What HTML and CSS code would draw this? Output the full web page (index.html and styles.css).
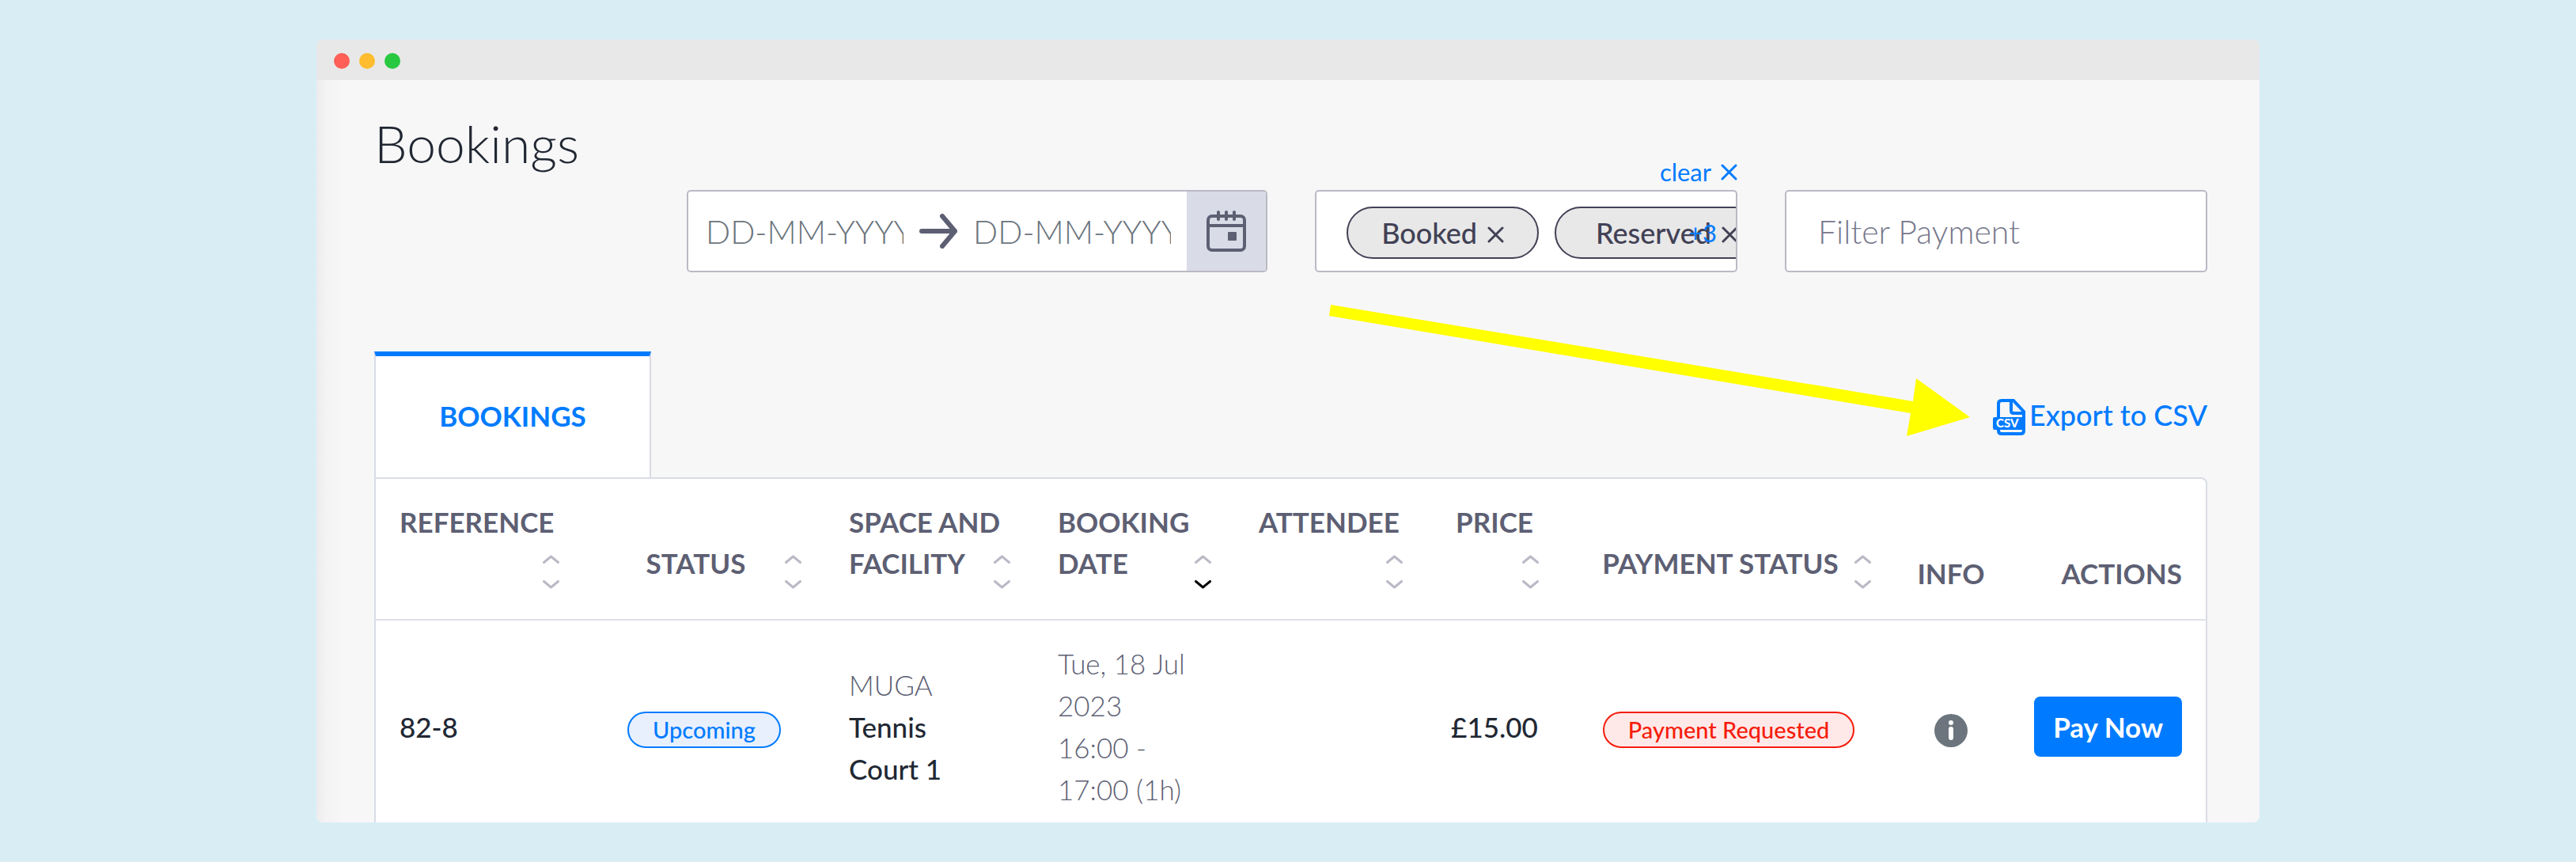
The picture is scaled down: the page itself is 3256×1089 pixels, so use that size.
FILE: index.html
```html
<!DOCTYPE html>
<html lang="en">
  <head>
    <meta charset="utf-8" />
    <title>Bookings</title>
    <meta name="viewport" content="width=device-width, initial-scale=1" />
    <link rel="stylesheet" href="styles.css">
  </head>
  <body>
    <svg class="sprite" aria-hidden="true">
      <symbol id="icon-sort-up" viewBox="0 0 21 11">
        <path d="M1.5 9.5 10.5 2 19.5 9.5" fill="none" stroke="currentColor" stroke-width="3" stroke-linecap="round" stroke-linejoin="round" />
      </symbol>
      <symbol id="icon-sort-down" viewBox="0 0 21 11">
        <path d="M1.5 1.5 10.5 9 19.5 1.5" fill="none" stroke="currentColor" stroke-width="3" stroke-linecap="round" stroke-linejoin="round" />
      </symbol>
      <symbol id="icon-close" viewBox="0 0 21 21">
        <path d="M2 2 19 19M19 2 2 19" fill="none" stroke="currentColor" stroke-width="3" stroke-linecap="round" />
      </symbol>
    </svg>

    <div class="window">
      <div class="title-bar">
        <span class="dot red"></span>
        <span class="dot yellow"></span>
        <span class="dot green"></span>
      </div>

      <main class="content">
        <header class="page-header">
          <h1>Bookings</h1>

          <form class="filters">
            <div class="field date-range">
              <input type="text" name="from" placeholder="DD-MM-YYYY" aria-label="From date" />
              <svg class="arrow-icon" viewBox="0 0 48 44" aria-hidden="true">
                <path d="M3 22H45M29 3 45 22 29 41" fill="none" stroke="currentColor" stroke-width="6" stroke-linecap="round" stroke-linejoin="round" />
              </svg>
              <input type="text" name="to" placeholder="DD-MM-YYYY" aria-label="To date" />
              <button type="button" class="calendar" aria-label="Open calendar">
                <svg viewBox="0 0 50 52" aria-hidden="true">
                  <rect x="2" y="7" width="46" height="43" rx="5" fill="none" stroke="currentColor" stroke-width="4" />
                  <path d="M2 19H48" stroke="currentColor" stroke-width="4" />
                  <path d="M15 2V11M25 2V11M35 2V11" stroke="currentColor" stroke-width="4" stroke-linecap="round" />
                  <rect x="27" y="27" width="11" height="11" rx="1" fill="currentColor" />
                </svg>
              </button>
            </div>

            <div class="status-filter">
              <button type="button" class="clear">clear <svg class="close-icon" aria-hidden="true"><use href="#icon-close" /></svg></button>
              <div class="field chips">
                <span class="chip">Booked <button type="button" aria-label="Remove Booked"><svg class="close-icon" aria-hidden="true"><use href="#icon-close" /></svg></button></span>
                <span class="chip">Reserved <button type="button" aria-label="Remove Reserved"><svg class="close-icon" aria-hidden="true"><use href="#icon-close" /></svg></button></span>
                <span class="more">+3</span>
              </div>
            </div>

            <input class="field payment" type="text" name="payment" placeholder="Filter Payment" aria-label="Filter Payment" />
          </form>
        </header>

        <div class="toolbar">
          <a class="tab" href="#bookings">BOOKINGS</a>
          <a class="export" href="#export">
            <svg class="csv-icon" viewBox="0 0 41 46" aria-hidden="true">
              <path d="M7 24V6Q7 2 11 2H26L39 16V40Q39 44 35 44H11Q7 44 7 40V36" fill="none" stroke="currentColor" stroke-width="4" />
              <path d="M23 3V15Q23 18 26 18H39" fill="none" stroke="currentColor" stroke-width="4" />
              <path d="M2 23H39V39H2Q0 39 0 36V26Q0 23 2 23Z" fill="currentColor" />
              <text x="4" y="36" class="csv-text">CSV</text>
            </svg>
            Export to CSV
          </a>
        </div>

        <div class="panel" id="bookings">
          <table>
            <colgroup>
              <col class="col-reference" />
              <col class="col-status" />
              <col class="col-space" />
              <col class="col-date" />
              <col class="col-attendee" />
              <col class="col-price" />
              <col class="col-payment" />
              <col class="col-info" />
              <col class="col-actions" />
            </colgroup>
            <thead>
              <tr>
                <th>
                  <button type="button" class="sort tall">
                    <span class="label">REFERENCE</span>
                    <span class="carets"><svg><use href="#icon-sort-up" /></svg><svg><use href="#icon-sort-down" /></svg></span>
                  </button>
                </th>
                <th>
                  <button type="button" class="sort center">
                    <span class="label">STATUS</span>
                    <span class="carets"><svg><use href="#icon-sort-up" /></svg><svg><use href="#icon-sort-down" /></svg></span>
                  </button>
                </th>
                <th>
                  <button type="button" class="sort tall">
                    <span class="label">SPACE AND FACILITY</span>
                    <span class="carets"><svg><use href="#icon-sort-up" /></svg><svg><use href="#icon-sort-down" /></svg></span>
                  </button>
                </th>
                <th aria-sort="descending">
                  <button type="button" class="sort tall">
                    <span class="label">BOOKING DATE</span>
                    <span class="carets"><svg><use href="#icon-sort-up" /></svg><svg class="active"><use href="#icon-sort-down" /></svg></span>
                  </button>
                </th>
                <th>
                  <button type="button" class="sort tall">
                    <span class="label">ATTENDEE</span>
                    <span class="carets"><svg><use href="#icon-sort-up" /></svg><svg><use href="#icon-sort-down" /></svg></span>
                  </button>
                </th>
                <th>
                  <button type="button" class="sort tall price">
                    <span class="label">PRICE</span>
                    <span class="carets"><svg><use href="#icon-sort-up" /></svg><svg><use href="#icon-sort-down" /></svg></span>
                  </button>
                </th>
                <th>
                  <button type="button" class="sort center">
                    <span class="label">PAYMENT STATUS</span>
                    <span class="carets"><svg><use href="#icon-sort-up" /></svg><svg><use href="#icon-sort-down" /></svg></span>
                  </button>
                </th>
                <th class="center">INFO</th>
                <th class="right">ACTIONS</th>
              </tr>
            </thead>
            <tbody>
              <tr>
                <td class="strong">82-8</td>
                <td class="center"><span class="badge blue">Upcoming</span></td>
                <td>MUGA <div class="strong">Tennis<br />Court 1</div></td>
                <td>Tue, 18 Jul 2023<br />16:00 -<br />17:00 (1h)</td>
                <td></td>
                <td class="center strong">£15.00</td>
                <td class="center"><span class="badge red">Payment Requested</span></td>
                <td class="center">
                  <button type="button" class="info" aria-label="Booking info">
                    <svg viewBox="0 0 42 42" aria-hidden="true">
                      <circle cx="21" cy="21" r="21" fill="currentColor" />
                      <circle cx="21" cy="11" r="3" fill="#fff" />
                      <path d="M21 19V30" stroke="#fff" stroke-width="6" stroke-linecap="round" />
                    </svg>
                  </button>
                </td>
                <td class="right"><button type="button" class="pay">Pay Now</button></td>
              </tr>
            </tbody>
          </table>
        </div>
      </main>

      <svg class="pointer" viewBox="0 0 810 174" aria-hidden="true">
        <path d="M2 8 738 130 742 101 810 150 730 174 735 145 0 22Z" fill="#ffff00" />
      </svg>
    </div>
  </body>
</html>
```

FILE: styles.css
```css
* {
  box-sizing: border-box;
}

body {
  font-family: Lato, "Open Sans", sans-serif;
  font-size: 35px;
  line-height: 52px;
  color: #5d5f73;
  height: 100vh;
  margin: 0;
  padding: 50px 400px;
  background-color: #d9edf5;
}

button {
  font: inherit;
  color: inherit;
  padding: 0;
  border: none;
  background: none;
  cursor: pointer;
}

a {
  color: #007bff;
  text-decoration: none;
}

svg {
  display: block;
}

.sprite {
  position: absolute;
  width: 0;
  height: 0;
}

.window {
  position: relative;
  height: 100%;
  overflow: hidden;
  border-radius: 8px;
  background-color: #f7f7f7;
}

.title-bar {
  display: flex;
  align-items: center;
  gap: 12px;
  height: 51px;
  padding: 3px 22px 0;
  background-color: #e8e8e8;
}

.dot {
  width: 20px;
  height: 20px;
  border-radius: 50%;
}

.dot.red {
  background-color: #ff5f57;
}

.dot.yellow {
  background-color: #febc2e;
}

.dot.green {
  background-color: #28c840;
}

.content {
  padding: 42px 66px 0 73px;
  background: linear-gradient(to right, #ececec, #f3f3f3 12px, #f7f7f7 34px);
}

.page-header {
  display: flex;
  margin-bottom: 100px;
}

h1 {
  flex: 0 0 395px;
  margin: 0;
  font-size: 66px;
  line-height: 76px;
  font-weight: 300;
  color: #212833;
}

.filters {
  flex: 1;
  display: grid;
  grid-template-columns: 11fr 8fr 8fr;
  align-items: end;
  gap: 60px;
  margin-top: 52px;
}

.field {
  width: 100%;
  height: 104px;
  border: 2px solid #bbb9c6;
  border-radius: 5px;
  background-color: #fff;
}

.field,
.field input {
  font-family: inherit;
  font-size: 41px;
  font-weight: 300;
}

::placeholder {
  color: #6c757d;
  opacity: 1;
}

.date-range {
  display: flex;
  align-items: center;
  gap: 20px;
  padding-left: 22px;
  overflow: hidden;
}

.date-range input {
  flex: 1;
  width: 0;
  padding: 0;
  border: none;
  background: none;
}

.arrow-icon {
  width: 48px;
  height: 44px;
}

.calendar {
  display: flex;
  align-items: center;
  justify-content: center;
  width: 100px;
  height: 100%;
  background-color: #d9dce6;
}

.calendar svg {
  width: 50px;
  height: 52px;
}

.status-filter {
  display: flex;
  flex-direction: column;
  min-width: 0;
}

.clear {
  display: flex;
  align-items: center;
  gap: 12px;
  align-self: flex-end;
  font-size: 31px;
  line-height: 45px;
  color: #007bff;
}

.close-icon {
  width: 21px;
  height: 21px;
}

.chips {
  position: relative;
  display: flex;
  align-items: center;
  gap: 20px;
  padding: 4px 0 0 38px;
  overflow: hidden;
}

.chip {
  flex: none;
  display: flex;
  align-items: center;
  gap: 13px;
  height: 66px;
  padding: 0 42px;
  font-size: 36px;
  font-weight: 500;
  color: #414155;
  border: 2px solid #414155;
  border-radius: 33px;
  background-color: #e8e8e8;
}

.chip + .chip {
  padding: 0 50px;
}

.chip .close-icon {
  margin-top: 4px;
}

.more {
  position: absolute;
  right: 24px;
  font-size: 31px;
  font-weight: 400;
  color: #007bff;
}

.payment {
  padding: 0 40px;
}

.payment::placeholder {
  color: #77788c;
}

.toolbar {
  display: flex;
  justify-content: space-between;
  align-items: center;
}

.tab {
  display: flex;
  align-items: center;
  justify-content: center;
  width: 350px;
  height: 159px;
  padding-bottom: 4px;
  font-weight: 700;
  border: 2px solid #d9dce6;
  border-top: 6px solid #007bff;
  border-bottom: none;
  background-color: #fff;
}

.export {
  display: flex;
  align-items: flex-end;
  gap: 5px;
  font-size: 36px;
  font-weight: 500;
}

.csv-icon {
  width: 41px;
  height: 46px;
}

.csv-text {
  font-size: 15px;
  font-weight: 900;
  fill: #fff;
}

.panel {
  border: 2px solid #d9dce6;
  border-top-right-radius: 8px;
  background-color: #fff;
}

table {
  width: 100%;
  table-layout: fixed;
  border-collapse: collapse;
}

.col-reference {
  width: 262px;
}

.col-status {
  width: 306px;
}

.col-space {
  width: 264px;
}

.col-date {
  width: 254px;
}

.col-attendee {
  width: 242px;
}

.col-price {
  width: 172px;
}

.col-payment {
  width: 420px;
}

.col-info {
  width: 142px;
}

.col-actions {
  width: 251px;
}

th,
td {
  padding: 28px 30px 32px;
  text-align: left;
}

th {
  vertical-align: bottom;
  font-weight: 700;
  border-bottom: 2px solid #dee2e6;
}

td {
  line-height: 53px;
  font-weight: 300;
  vertical-align: middle;
}

th.center,
td.center {
  padding-left: 0;
  padding-right: 0;
  text-align: center;
}

th.right,
td.right {
  text-align: right;
}

.strong {
  font-weight: 500;
  color: #212833;
}

/* label and carets share one cell, so long labels may run above the carets */
.sort {
  display: grid;
  width: 100%;
  text-align: left;
}

.sort .label,
.sort .carets {
  grid-area: 1 / 1;
}

.sort.tall {
  height: 117px;
}

.sort.tall .label {
  align-self: start;
}

.sort.price .label {
  justify-self: center;
}

.sort.center .label {
  padding-right: 21px;
  text-align: center;
}

.carets {
  display: flex;
  flex-direction: column;
  gap: 21px;
  align-self: end;
  justify-self: end;
  padding: 16px 0 6px;
  color: #bbb9c6;
}

.carets svg {
  width: 21px;
  height: 11px;
}

.carets .active {
  color: #000;
}

.badge {
  display: inline-block;
  height: 46px;
  padding: 0 30px;
  font-size: 29px;
  line-height: 41px;
  font-weight: 500;
  border: 2px solid;
  border-radius: 23px;
  vertical-align: middle;
}

.badge.blue {
  color: #007bff;
  background-color: #e8f0fe;
}

.badge.red {
  color: #f61c0d;
  background-color: #fee9e8;
}

.info {
  color: #6c757d;
  vertical-align: middle;
}

.info svg {
  width: 42px;
  height: 42px;
}

.pay {
  height: 76px;
  padding: 0 24px;
  font-weight: 700;
  color: #fff;
  border-radius: 8px;
  background-color: #007bff;
}

.pointer {
  position: absolute;
  top: 327px;
  right: 366px;
  width: 810px;
  height: 174px;
}
```
